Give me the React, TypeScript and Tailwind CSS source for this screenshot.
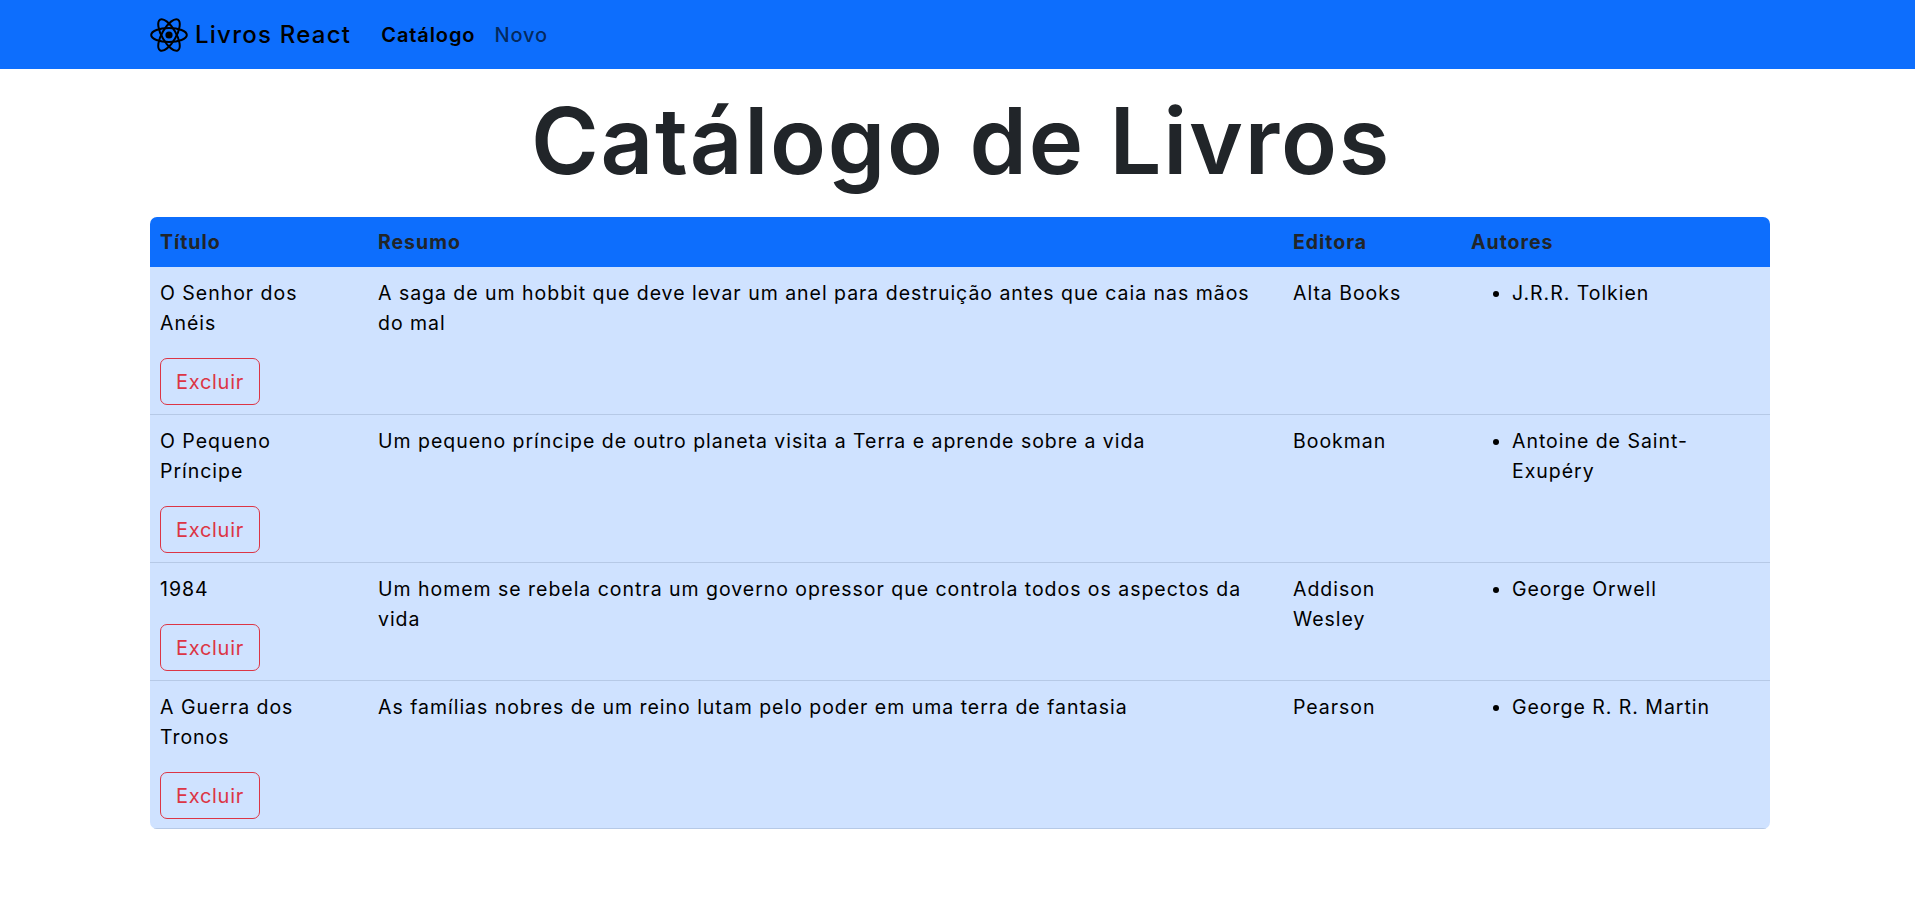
import React from 'react';

type Livro = { titulo: string; resumo: string; editora: string; autor: string };

const livros: Livro[] = [
  { titulo: 'O Senhor dos Anéis', resumo: 'A saga de um hobbit que deve levar um anel para destruição antes que caia nas mãos do mal', editora: 'Alta Books', autor: 'J.R.R. Tolkien' },
  { titulo: 'O Pequeno Príncipe', resumo: 'Um pequeno príncipe de outro planeta visita a Terra e aprende sobre a vida', editora: 'Bookman', autor: 'Antoine de Saint-Exupéry' },
  { titulo: '1984', resumo: 'Um homem se rebela contra um governo opressor que controla todos os aspectos da vida', editora: 'Addison Wesley', autor: 'George Orwell' },
  { titulo: 'A Guerra dos Tronos', resumo: 'As famílias nobres de um reino lutam pelo poder em uma terra de fantasia', editora: 'Pearson', autor: 'George R. R. Martin' },
];

function ReactLogo() {
  return (
    <svg width="38" height="38" viewBox="0 0 38 38" fill="none" stroke="#000" strokeWidth="2">
      <circle cx="19" cy="19" r="3.6" fill="#000" stroke="none" />
      <ellipse cx="19" cy="19" rx="17.8" ry="7" />
      <ellipse cx="19" cy="19" rx="17.8" ry="7" transform="rotate(60 19 19)" />
      <ellipse cx="19" cy="19" rx="17.8" ry="7" transform="rotate(120 19 19)" />
    </svg>
  );
}

export default function App() {
  return (
    <div className="min-h-screen bg-white font-['Inter',sans-serif] text-[19.5px] leading-[30px] text-[#212529] tracking-[0.97px]">
      <nav className="h-[69px] bg-[#0d6efd]">
        <div className="mx-[150px] flex h-full items-center">
          <a className="flex items-center gap-[7px] text-[24px] font-medium tracking-[1.25px] text-black">
            <ReactLogo />
            <span>Livros React</span>
          </a>
          <a className="ml-[30px] text-[20px] font-semibold tracking-[0.9px] text-black">Catálogo</a>
          <a className="ml-[19px] text-[20px] font-medium tracking-[0.9px] text-black/65">Novo</a>
        </div>
      </nav>

      <main className="mx-[150px]">
        <h1 className="mt-[10px] mb-[16px] h-[122px] pl-[7px] text-center text-[92px] leading-[124px] font-semibold tracking-[1.7px]">Catálogo de Livros</h1>

        <table className="w-[1620px] table-fixed border-separate border-spacing-0 overflow-hidden rounded-[7px] text-left text-black">
          <colgroup>
            <col className="w-[218px]" />
            <col className="w-[915px]" />
            <col className="w-[178px]" />
            <col className="w-[309px]" />
          </colgroup>
          <thead className="bg-[#0d6efd] text-[#212529]">
            <tr>
              <th className="h-[50px] px-[10px] font-bold">Título</th>
              <th className="px-[10px] font-bold">Resumo</th>
              <th className="px-[10px] font-bold">Editora</th>
              <th className="px-[10px] font-bold">Autores</th>
            </tr>
          </thead>
          <tbody className="bg-[#cfe2ff]">
            {livros.map((l) => (
              <tr key={l.titulo}>
                <td className="border-b border-[#b6c9e6] px-[10px] pt-[11px] pb-[9px] align-top">
                  <p className="mb-[20px]">{l.titulo}</p>
                  <button className="block h-[47px] w-[100px] rounded-[7px] border border-[#dc3545] text-[20px] tracking-[0.7px] text-[#dc3545]">Excluir</button>
                </td>
                <td className="border-b border-[#b6c9e6] px-[10px] pt-[11px] pb-[9px] align-top">{l.resumo}</td>
                <td className="border-b border-[#b6c9e6] px-[10px] pt-[11px] pb-[9px] align-top">{l.editora}</td>
                <td className="border-b border-[#b6c9e6] px-[10px] pt-[11px] pb-[9px] align-top">
                  <ul className="list-disc pl-[41px]">
                    <li>{l.autor}</li>
                  </ul>
                </td>
              </tr>
            ))}
          </tbody>
        </table>
      </main>
    </div>
  );
}
